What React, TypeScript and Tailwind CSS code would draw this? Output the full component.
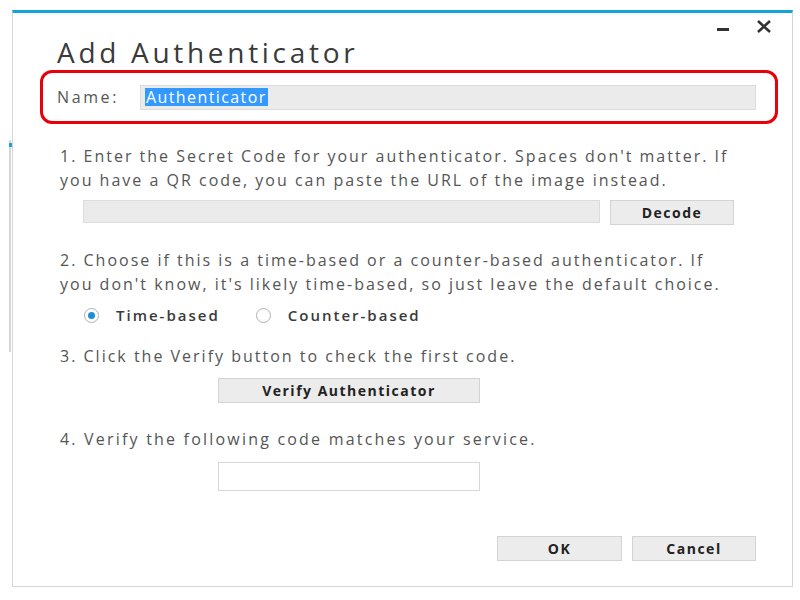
const FONT = "font-['Open_Sans','Liberation_Sans',sans-serif]";

function Button({ label, className }: { label: string; className: string }) {
  return (
    <button
      className={`h-[25px] bg-[#ececec] border border-[#d3d3d3] text-[14px] tracking-[1.5px] font-bold text-[#222] ${className}`}
    >
      {label}
    </button>
  );
}

function Radio({ checked, label }: { checked: boolean; label: string }) {
  return (
    <label className="flex items-center gap-[17px]">
      <span className="w-[15px] h-[15px] rounded-full border-[1.5px] border-[#b0b0b0] bg-white flex items-center justify-center">
        {checked && <span className="w-[7px] h-[7px] rounded-full bg-[#1d8fd8]" />}
      </span>
      <span className="text-[15px] tracking-[2px] font-semibold text-[#3a3a3a]">{label}</span>
    </label>
  );
}

export default function App() {
  return (
    <div className={`w-[800px] h-[600px] bg-white relative overflow-hidden ${FONT}`}>
      {/* edge of the window behind */}
      <div className="absolute left-[9px] top-[140px] w-[2px] h-[212px] bg-[#d6d6d6]" />
      <div className="absolute left-[9px] top-[143px] w-[3px] h-[4px] bg-[#1aa3db]" />

      <div className="absolute left-[12px] top-[10px] w-[781px] h-[577px] bg-white border-t-[3px] border-t-[#12a6d8] border-x border-b border-[#d5d5d5]">
        {/* window controls */}
        <div className="h-[21px] flex items-start justify-end pr-[20px] gap-[26px]">
          <svg width="13" height="21" viewBox="0 0 13 21">
            <rect x="0" y="15" width="12" height="3" fill="#333" />
          </svg>
          <svg width="16" height="16" viewBox="0 0 16 16" className="mt-[6px]">
            <path d="M2 2 L14 13 M14 2 L2 13" stroke="#333" strokeWidth="2.6" />
          </svg>
        </div>

        <h1 className="ml-[44px] h-[36px] leading-[36px] text-[28px] tracking-[3.7px] text-[#3a3a3a]">Add Authenticator</h1>

        <div className="ml-[27px] w-[738px] h-[54px] border-[3px] border-[#e8000b] rounded-[12px] flex items-center pl-[14px] pr-[19px]">
          <span className="w-[83px] text-[16px] tracking-[2.6px] text-[#555]">Name:</span>
          <div className="flex-1 h-[25px] bg-[#ebebeb] border border-[#dcdcdc] flex items-center pl-[4px]">
            <span className="bg-[#3399ff] text-white text-[16px] tracking-[1.4px] leading-[18px] px-[1px]">Authenticator</span>
          </div>
        </div>

        <p className="ml-[47px] w-[682px] mt-[20px] text-[16px] leading-[24px] tracking-[2px] text-[#555]">
          1. Enter the Secret Code for your authenticator. Spaces don't matter. If you have a QR code, you can paste the URL of the image instead.
        </p>

        <div className="ml-[70px] mt-[8px] flex items-start gap-[10px]">
          <div className="w-[517px] h-[23px] bg-[#ebebeb] border border-[#dcdcdc]" />
          <Button label="Decode" className="w-[124px]" />
        </div>

        <p className="ml-[47px] w-[682px] mt-[23px] text-[16px] leading-[24px] tracking-[2px] text-[#555]">
          2. Choose if this is a time-based or a counter-based authenticator. If you don't know, it's likely time-based, so just leave the default choice.
        </p>

        <div className="ml-[71px] mt-[9px] h-[20px] flex items-center gap-[36px]">
          <Radio checked label="Time-based" />
          <Radio checked={false} label="Counter-based" />
        </div>

        <p className="ml-[47px] mt-[19px] text-[16px] leading-[24px] tracking-[2px] text-[#555]">
          3. Click the Verify button to check the first code.
        </p>

        <Button label="Verify Authenticator" className="ml-[205px] mt-[10px] w-[262px] block" />

        <p className="ml-[47px] mt-[24px] text-[16px] leading-[24px] tracking-[2.2px] text-[#555]">
          4. Verify the following code matches your service.
        </p>

        <div className="ml-[205px] mt-[11px] w-[262px] h-[29px] bg-white border border-[#d8d8d8]" />

        <div className="ml-[484px] mt-[45px] flex gap-[10px]">
          <Button label="OK" className="w-[125px]" />
          <Button label="Cancel" className="w-[124px]" />
        </div>
      </div>
    </div>
  );
}
